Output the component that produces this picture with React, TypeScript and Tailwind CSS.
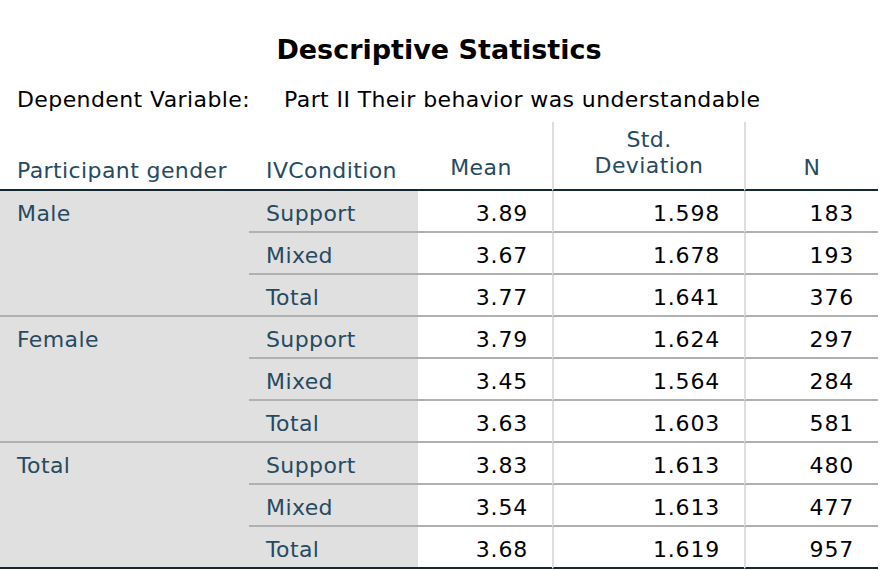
import * as React from "react"

type Row = { cond: string; mean: string; sd: string; n: string }
type Group = { gender: string; rows: Row[] }

const groups: Group[] = [
  {
    gender: "Male",
    rows: [
      { cond: "Support", mean: "3.89", sd: "1.598", n: "183" },
      { cond: "Mixed", mean: "3.67", sd: "1.678", n: "193" },
      { cond: "Total", mean: "3.77", sd: "1.641", n: "376" },
    ],
  },
  {
    gender: "Female",
    rows: [
      { cond: "Support", mean: "3.79", sd: "1.624", n: "297" },
      { cond: "Mixed", mean: "3.45", sd: "1.564", n: "284" },
      { cond: "Total", mean: "3.63", sd: "1.603", n: "581" },
    ],
  },
  {
    gender: "Total",
    rows: [
      { cond: "Support", mean: "3.83", sd: "1.613", n: "480" },
      { cond: "Mixed", mean: "3.54", sd: "1.613", n: "477" },
      { cond: "Total", mean: "3.68", sd: "1.619", n: "957" },
    ],
  },
]

const font = { fontFamily: '"DejaVu Sans", Verdana, sans-serif' }

export default function App() {
  return (
    <div className="w-[888px] h-[570px] overflow-hidden bg-white" style={font}>
      <div className="w-[878px]">
        {/* Title */}
        <div className="pt-[32px] h-[68px] text-center text-[27px] leading-[36px] font-bold text-black">
          Descriptive Statistics
        </div>
        <div className="mt-[17px] h-[30px] pl-[17px] text-[22px] leading-[30px] tracking-[0.4px] text-black whitespace-nowrap">
          Dependent Variable:<span className="ml-[34px]">Part II Their behavior was understandable</span>
        </div>

        {/* Table */}
        <div className="mt-[7px] grid grid-cols-[249px_169px_134px_192px_134px] text-[22px] leading-[26px] tracking-[0.4px] text-[#264a60]">
          {/* Header */}
          <div className="h-[69px] border-b-2 border-[#152935] flex items-end pl-[17px] pb-[5px]">
            Participant gender
          </div>
          <div className="h-[69px] border-b-2 border-[#152935] flex items-end pl-[17px] pb-[5px]">
            IVCondition
          </div>
          <div className="h-[69px] border-b-2 border-[#152935] flex items-end justify-center pb-[8px] pr-[8px]">
            Mean
          </div>
          <div className="h-[69px] border-b-2 border-l-2 border-l-[#dedede] border-b-[#152935] flex items-end justify-center text-center pb-[10px]">
            Std.
            <br />
            Deviation
          </div>
          <div className="h-[69px] border-b-2 border-l-2 border-l-[#dedede] border-b-[#152935] flex items-end justify-center pb-[8px]">
            N
          </div>

          {/* Body */}
          {groups.map((g, gi) => {
            const lastGroup = gi === groups.length - 1
            return (
              <React.Fragment key={g.gender}>
                <div
                  className={`row-span-3 bg-[#e0e0e0] border-b-2 pl-[17px] pt-[10px] ${
                    lastGroup ? "border-[#152935]" : "border-[#b0b0b0]"
                  }`}
                >
                  {g.gender}
                </div>
                {g.rows.map((r, ri) => {
                  const line =
                    lastGroup && ri === g.rows.length - 1
                      ? "border-b-[#152935]"
                      : "border-b-[#b0b0b0]"
                  return (
                    <React.Fragment key={r.cond}>
                      <div className={`h-[42px] bg-[#e0e0e0] border-b-2 ${line} pl-[17px] pt-[10px]`}>
                        {r.cond}
                      </div>
                      <div
                        className={`h-[42px] border-b-2 ${line} pr-[24px] pt-[10px] text-right text-[#010205] tracking-[0.8px]`}
                      >
                        {r.mean}
                      </div>
                      <div
                        className={`h-[42px] border-b-2 ${line} border-l-2 border-l-[#dedede] pr-[24px] pt-[10px] text-right text-[#010205] tracking-[0.8px]`}
                      >
                        {r.sd}
                      </div>
                      <div
                        className={`h-[42px] border-b-2 ${line} border-l-2 border-l-[#dedede] pr-[24px] pt-[10px] text-right text-[#010205] tracking-[0.8px]`}
                      >
                        {r.n}
                      </div>
                    </React.Fragment>
                  )
                })}
              </React.Fragment>
            )
          })}
        </div>
      </div>
    </div>
  )
}
